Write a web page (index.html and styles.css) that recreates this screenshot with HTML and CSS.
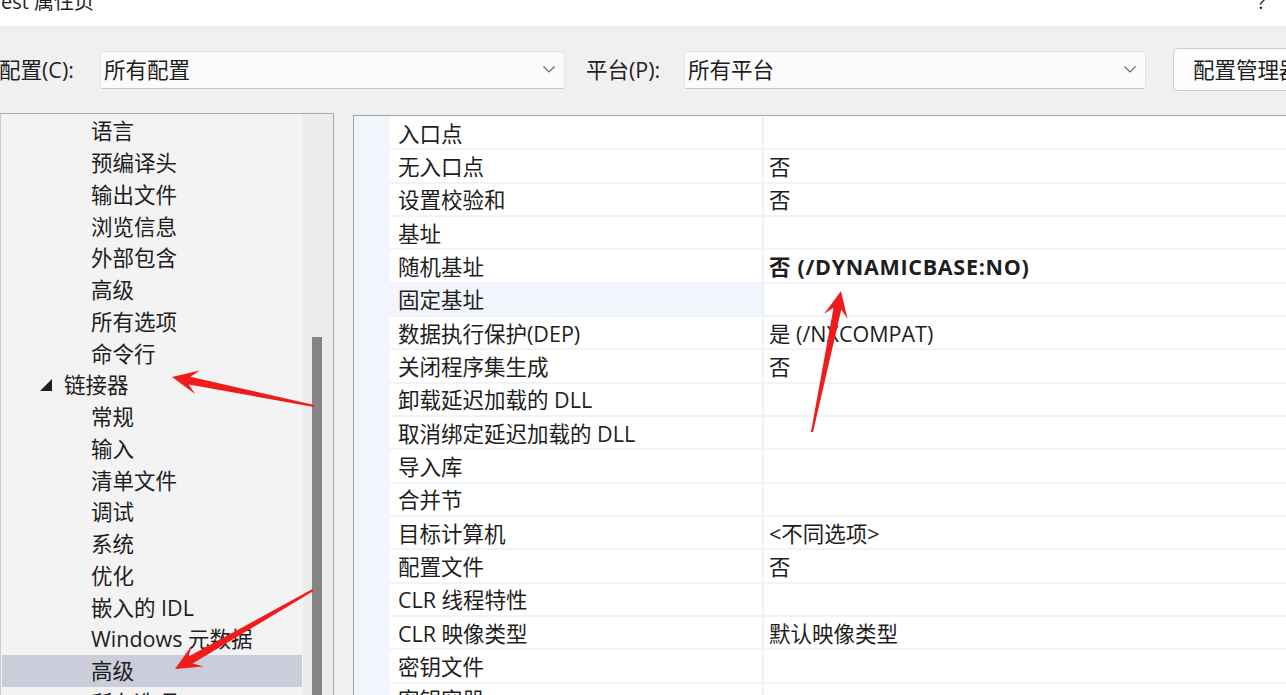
FILE: index.html
```html
<!DOCTYPE html>
<html lang="zh-CN">
<head>
<meta charset="utf-8">
<title>Test 属性页</title>
<link rel="stylesheet" href="styles.css">
</head>
<body>
<div class="dialog">
  <div class="titlebar">
    <span class="title">est 属性页</span>
    <span class="help">?</span>
  </div>

  <div class="toolbar">
    <label class="lbl lbl-config">配置(C):</label>
    <div class="combo combo-config">
      <span>所有配置</span>
      <svg class="chev" viewBox="0 0 12 7" width="12" height="7"><polyline points="0.5,0.5 6,6 11.5,0.5"/></svg>
    </div>
    <label class="lbl lbl-platform">平台(P):</label>
    <div class="combo combo-platform">
      <span>所有平台</span>
      <svg class="chev" viewBox="0 0 12 7" width="12" height="7"><polyline points="0.5,0.5 6,6 11.5,0.5"/></svg>
    </div>
    <button class="btn-manager" type="button">配置管理器(O)...</button>
  </div>

  <div class="main">
    <div class="tree-panel">
      <ul class="tree">
        <li class="node child">语言</li>
        <li class="node child">预编译头</li>
        <li class="node child">输出文件</li>
        <li class="node child">浏览信息</li>
        <li class="node child">外部包含</li>
        <li class="node child">高级</li>
        <li class="node child">所有选项</li>
        <li class="node child">命令行</li>
        <li class="node parent"><svg class="twisty" viewBox="0 0 12 12" width="12" height="12"><polygon points="12,0 12,12 0,12"/></svg>链接器</li>
        <li class="node child">常规</li>
        <li class="node child">输入</li>
        <li class="node child">清单文件</li>
        <li class="node child">调试</li>
        <li class="node child">系统</li>
        <li class="node child">优化</li>
        <li class="node child">嵌入的 IDL</li>
        <li class="node child">Windows 元数据</li>
        <li class="node child selected">高级</li>
        <li class="node child">所有选项</li>
      </ul>
      <div class="vscroll"><div class="thumb"></div></div>
    </div>

    <div class="grid-panel">
      <div class="gutter"></div>
      <div class="rows">
        <div class="row"><div class="name">入口点</div><div class="value"></div></div>
        <div class="row"><div class="name">无入口点</div><div class="value">否</div></div>
        <div class="row"><div class="name">设置校验和</div><div class="value">否</div></div>
        <div class="row"><div class="name">基址</div><div class="value"></div></div>
        <div class="row"><div class="name">随机基址</div><div class="value bold">否 (/DYNAMICBASE:NO)</div></div>
        <div class="row hl"><div class="name">固定基址</div><div class="value"></div></div>
        <div class="row"><div class="name">数据执行保护(DEP)</div><div class="value">是 (/NXCOMPAT)</div></div>
        <div class="row"><div class="name">关闭程序集生成</div><div class="value">否</div></div>
        <div class="row"><div class="name">卸载延迟加载的 DLL</div><div class="value"></div></div>
        <div class="row"><div class="name">取消绑定延迟加载的 DLL</div><div class="value"></div></div>
        <div class="row"><div class="name">导入库</div><div class="value"></div></div>
        <div class="row"><div class="name">合并节</div><div class="value"></div></div>
        <div class="row"><div class="name">目标计算机</div><div class="value">&lt;不同选项&gt;</div></div>
        <div class="row"><div class="name">配置文件</div><div class="value">否</div></div>
        <div class="row"><div class="name">CLR 线程特性</div><div class="value"></div></div>
        <div class="row"><div class="name">CLR 映像类型</div><div class="value">默认映像类型</div></div>
        <div class="row"><div class="name">密钥文件</div><div class="value"></div></div>
        <div class="row"><div class="name">密钥容器</div><div class="value"></div></div>
      </div>
    </div>
  </div>

  <svg class="annotations" viewBox="0 0 1286 695" width="1286" height="695">
    <polygon points="314.2,405.0 190.4,376.7 199.9,370.4 172,377 195.1,394.0 188.8,384.5 313.8,407.0"/>
    <polygon points="312.5,589.1 188.6,656.6 191.6,645.7 175,669 203.5,666.5 192.6,663.5 313.5,590.9"/>
    <polygon points="813.0,432.2 841.3,309.4 847.5,318.9 841,291 824.0,314.1 833.5,307.8 811.0,431.8"/>
  </svg>
</div>
</body>
</html>
```

FILE: styles.css
```css
* {
  box-sizing: border-box;
}

html,
body {
  margin: 0;
  padding: 0;
}

body {
  width: 1286px;
  height: 695px;
  overflow: hidden;
  background: #f0f0f0;
  font-family: "Open Sans", "Noto Sans CJK SC", sans-serif;
  font-size: 21.5px;
  color: #1e1e1e;
}

.dialog {
  position: relative;
  width: 1286px;
  height: 695px;
  overflow: hidden;
  display: flex;
  flex-direction: column;
}

/* title bar */
.titlebar {
  flex: none;
  height: 26px;
  background: #ffffff;
  display: flex;
  justify-content: space-between;
  overflow: hidden;
  font-size: 20px;
  line-height: 20px;
}

.title {
  margin-top: -8px;
  margin-left: 1px;
}

.help {
  margin-top: -8px;
  margin-right: 20px;
}

/* toolbar */
.toolbar {
  flex: none;
  height: 87px;
  display: flex;
  align-items: center;
}

.lbl {
  flex: none;
  line-height: 24px;
  white-space: nowrap;
}

.lbl-config {
  width: 101px;
  margin-left: -1px;
}

.lbl-platform {
  width: 119px;
  padding-left: 21px;
}

.combo {
  flex: none;
  height: 38px;
  display: flex;
  align-items: center;
  justify-content: space-between;
  background: #fbfbfb;
  border: 1px solid #e4e4e4;
  border-bottom-color: #c9c9c9;
  border-radius: 3px;
  padding: 0 9px 0 3px;
  line-height: 24px;
}

.combo-config {
  width: 465px;
}

.combo-platform {
  width: 462px;
}

.chev {
  fill: none;
  stroke: #6a6a6a;
  stroke-width: 1.2;
}

.btn-manager {
  flex: none;
  margin-left: 27px;
  width: 200px;
  height: 43px;
  border: 1px solid #cccccc;
  border-radius: 5px;
  background: #fdfdfd;
  font: inherit;
  color: inherit;
  text-align: left;
  white-space: nowrap;
  padding: 0 0 0 19px;
  line-height: 24px;
}

/* main area */
.main {
  flex: 1;
  min-height: 0;
  display: flex;
}

.tree-panel {
  flex: none;
  width: 334px;
  display: flex;
  border-top: 1px solid #a8a8a8;
  border-right: 1px solid #a8a8a8;
  border-left: 1px solid #cdcdcd;
  background: #f3f3f3;
}

.tree {
  list-style: none;
  margin: 0;
  padding: 1px 1px 0 1px;
  flex: 1;
  overflow: hidden;
}

.node {
  height: 31.75px;
  display: flex;
  align-items: center;
  white-space: nowrap;
  line-height: 24px;
  padding-top: 1px;
}

.child {
  padding-left: 89px;
}

.parent {
  padding-left: 38px;
}

.twisty {
  flex: none;
  margin-right: 12px;
  fill: #1e1e1e;
}

.selected {
  background: #cbcdda;
}

.vscroll {
  flex: none;
  width: 30px;
  background: #ececec;
  padding-left: 9px;
  padding-top: 223px;
  display: flex;
  flex-direction: column;
}

.thumb {
  flex: 1;
  width: 10px;
  background: #858585;
}

/* property grid */
.grid-panel {
  flex: 1;
  margin-left: 19px;
  margin-top: 2px;
  display: flex;
  border-top: 1px solid #a3a3a3;
  border-left: 1px solid #a3a3a3;
  background: #ffffff;
}

.gutter {
  flex: none;
  width: 36px;
  background: #f2f5fb;
}

.rows {
  flex: 1;
  padding-top: 1px;
  overflow: hidden;
}

.row {
  height: 33.33px;
  display: flex;
  border-bottom: 2px solid #f0f3f9;
}

.name {
  flex: none;
  width: 374px;
  padding-left: 8px;
  padding-top: 2px;
  border-right: 2px solid #eef1f8;
  display: flex;
  align-items: center;
  line-height: 24px;
  white-space: nowrap;
}

.value {
  flex: 1;
  padding-left: 5px;
  padding-top: 2px;
  display: flex;
  align-items: center;
  line-height: 24px;
  white-space: nowrap;
}

.hl .name {
  background: #f2f5fb;
}

.bold {
  font-weight: 700;
  letter-spacing: 0.7px;
}

/* red annotation arrows */
.annotations {
  position: absolute;
  left: 0;
  top: 0;
  pointer-events: none;
  fill: #f01c1c;
}
```
